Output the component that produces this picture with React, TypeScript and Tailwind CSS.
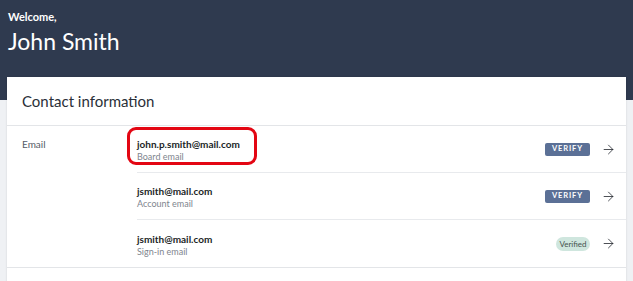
import { ArrowRight } from "lucide-react";

const EMAILS = [
  { id: "board", address: "john.p.smith@mail.com", kind: "Board email", verified: false, highlight: true },
  { id: "account", address: "jsmith@mail.com", kind: "Account email", verified: false, highlight: false },
  { id: "signin", address: "jsmith@mail.com", kind: "Sign-in email", verified: true, highlight: false },
];

export default function App() {
  return (
    <div className="min-h-screen bg-[#eff1f4] font-['Lato',sans-serif] text-[#1f2430]">
      {/* header */}
      <div className="h-[100px] bg-[#2f3a4f] px-[8px] pt-[10px] text-white">
        <div className="text-[11px] font-bold leading-[14px]">Welcome,</div>
        <div className="mt-[3px] text-[23px] leading-[28px]">John Smith</div>
      </div>

      {/* card */}
      <div className="mx-[7px] -mt-[23px] bg-white shadow-[0_0_2px_rgba(0,0,0,0.12)]">
        <div className="flex h-[49px] items-center border-b border-[#e3e5e8] px-[15px] text-[15px] text-[#2a2f38]">
          Contact information
        </div>

        <div className="flex border-b border-[#e3e5e8]">
          <div className="w-[130px] shrink-0 pl-[15px] pt-[11px] text-[10px] text-[#555b66]">Email</div>
          <div className="flex-1">
            {EMAILS.map((e, i) => (
              <div
                key={e.id}
                className={
                  "flex h-[47px] items-center pr-[10px] " +
                  (i < EMAILS.length - 1 ? "border-b border-[#e8eaed]" : "")
                }
              >
                <div className="relative flex-1 pt-[2px]">
                  {e.highlight && (
                    <div className="absolute -left-[10px] -top-[9px] h-[38px] w-[130px] rounded-[9px] border-[3px] border-[#e30613]" />
                  )}
                  <div className="text-[10px] font-bold leading-[13px] text-[#1b1f27]">{e.address}</div>
                  <div className="text-[9px] leading-[11px] text-[#80858e]">{e.kind}</div>
                </div>
                {e.verified ? (
                  <span className="flex h-[14px] w-[34px] items-center justify-center rounded-full bg-[#cfe6de] text-[8px] text-[#46524e]">
                    Verified
                  </span>
                ) : (
                  <span className="flex h-[13px] w-[45px] items-center justify-center rounded-[2px] bg-[#5b7096] text-[7.5px] font-bold tracking-[0.12em] text-white">
                    VERIFY
                  </span>
                )}
                <ArrowRight className="ml-[11px] h-[15px] w-[15px] text-[#1b1f27]" strokeWidth={1.25} />
              </div>
            ))}
          </div>
        </div>
        <div className="h-[20px]" />
      </div>
    </div>
  );
}
